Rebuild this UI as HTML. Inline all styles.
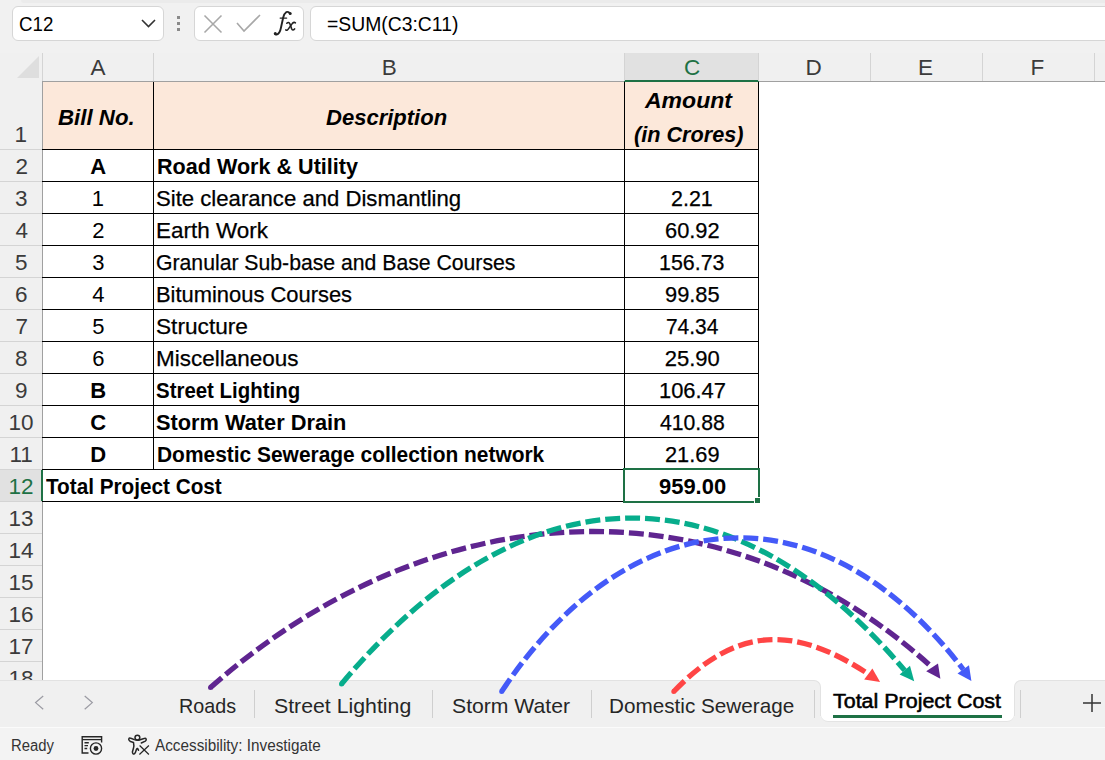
<!DOCTYPE html>
<html><head><meta charset="utf-8"><style>
*{margin:0;padding:0;box-sizing:border-box}
html,body{width:1105px;height:760px;overflow:hidden;background:#fff;font-family:"Liberation Sans",sans-serif;color:#000}
.a{position:absolute}
.t{position:absolute;white-space:nowrap;transform-origin:0 0;line-height:1}
.box{position:absolute;background:#fff;border:1px solid #d6d6d6;border-radius:6px}
</style></head><body>
<div class="a" style="left:0;top:0;width:1105px;height:53px;background:#f1f1f1"></div>
<div class="a" style="left:21px;top:0;width:1084px;height:3px;background:#ebebeb;border-bottom-left-radius:8px"></div>
<div class="box" style="left:12px;top:6px;width:152px;height:35px"></div>
<div class="t" style="left:18.74px;top:15.20px;font-family:'Liberation Sans';font-size:19.5px;font-weight:normal;font-style:normal;color:#000;transform:scaleX(0.9588);">C12</div>
<svg class="a" style="left:139px;top:16px" width="20" height="14"><path d="M3 4 L9.5 10.5 L16 4" fill="none" stroke="#333" stroke-width="1.6"/></svg>
<div class="a" style="left:177px;top:16px;width:3px;height:3px;background:#8a8a8a"></div>
<div class="a" style="left:177px;top:22px;width:3px;height:3px;background:#8a8a8a"></div>
<div class="a" style="left:177px;top:28px;width:3px;height:3px;background:#8a8a8a"></div>
<div class="box" style="left:194px;top:6px;width:110px;height:35px"></div>
<svg class="a" style="left:194px;top:6px" width="110" height="35"><path d="M10.5 9.5 L27.5 26.5 M27.5 9.5 L10.5 26.5" stroke="#a8a8a8" stroke-width="1.6" fill="none"/><path d="M43 17 L50 25 L66 9" stroke="#a8a8a8" stroke-width="1.6" fill="none"/></svg>
<svg class="a" style="left:264px;top:6px" width="40" height="34" viewBox="264 6 40 34"><g fill="none" stroke="#222" stroke-linecap="round">
<path d="M289.6 13.2 Q288.6 11.2 286.2 12.2 Q284 13.6 283.2 17.5 L281 27.5 Q279.8 33.8 276.6 34.6 Q275.2 34.9 275 33.6" stroke-width="1.9"/>
<path d="M280.2 18.1 H286.6" stroke-width="1.4"/>
<path d="M286.8 23.2 Q288.6 21.4 289.9 23.8 L291.6 28.6 Q292.6 31.2 294.6 28.9" stroke-width="1.6"/>
<path d="M295.4 22.8 Q294 21.7 292.4 23.4 L288.4 28.9 Q287 30.9 285.8 29.9" stroke-width="1.6"/>
</g><circle cx="290.2" cy="13.4" r="1.5" fill="#222"/><circle cx="275.3" cy="33.4" r="1.5" fill="#222"/></svg>
<div class="box" style="left:310px;top:6px;width:820px;height:35px"></div>
<div class="t" style="left:326.71px;top:14.90px;font-family:'Liberation Sans';font-size:19.5px;font-weight:normal;font-style:normal;color:#000;transform:scaleX(0.9923);">=SUM(C3:C11)</div>
<div class="a" style="left:0;top:53px;width:1105px;height:28px;background:#f0f0f0"></div>
<div class="a" style="left:42px;top:81px;width:1063px;height:1px;background:#a0a0a0"></div>
<div class="a" style="left:4px;top:81px;width:38px;height:1px;background:linear-gradient(to right,#f0f0f0,#d0d0d0)"></div>
<div class="a" style="left:0;top:53px;width:42px;height:627px;background:#f0f0f0"></div>
<div class="a" style="left:42px;top:81px;width:1px;height:599px;background:#a0a0a0"></div>
<div class="a" style="left:42px;top:53px;width:1px;height:28px;background:#d4d4d4"></div>
<svg class="a" style="left:16px;top:55px" width="24" height="24"><path d="M23 1 L23 23 L1 23 Z" fill="#dedede"/></svg>
<div class="a" style="left:624px;top:53px;width:135px;height:28px;background:#e1e1e1"></div>
<div class="a" style="left:624px;top:80px;width:135px;height:2px;background:#1e7145"></div>
<div class="a" style="left:0;top:470px;width:42px;height:31px;background:#e1e1e1"></div>
<div class="a" style="left:41px;top:469px;width:2px;height:33px;background:#1e7145"></div>
<div class="a" style="left:153px;top:53px;width:1px;height:28px;background:#d4d4d4"></div>
<div class="a" style="left:624px;top:53px;width:1px;height:28px;background:#d4d4d4"></div>
<div class="a" style="left:758px;top:53px;width:1px;height:28px;background:#d4d4d4"></div>
<div class="a" style="left:870px;top:53px;width:1px;height:28px;background:#d4d4d4"></div>
<div class="a" style="left:982px;top:53px;width:1px;height:28px;background:#d4d4d4"></div>
<div class="a" style="left:1094px;top:53px;width:1px;height:28px;background:#d4d4d4"></div>
<div class="a" style="left:1206px;top:53px;width:1px;height:28px;background:#d4d4d4"></div>
<div class="a" style="left:0;top:149px;width:42px;height:1px;background:#d4d4d4"></div>
<div class="a" style="left:0;top:181px;width:42px;height:1px;background:#d4d4d4"></div>
<div class="a" style="left:0;top:213px;width:42px;height:1px;background:#d4d4d4"></div>
<div class="a" style="left:0;top:245px;width:42px;height:1px;background:#d4d4d4"></div>
<div class="a" style="left:0;top:277px;width:42px;height:1px;background:#d4d4d4"></div>
<div class="a" style="left:0;top:309px;width:42px;height:1px;background:#d4d4d4"></div>
<div class="a" style="left:0;top:341px;width:42px;height:1px;background:#d4d4d4"></div>
<div class="a" style="left:0;top:373px;width:42px;height:1px;background:#d4d4d4"></div>
<div class="a" style="left:0;top:405px;width:42px;height:1px;background:#d4d4d4"></div>
<div class="a" style="left:0;top:437px;width:42px;height:1px;background:#d4d4d4"></div>
<div class="a" style="left:0;top:469px;width:42px;height:1px;background:#d4d4d4"></div>
<div class="a" style="left:0;top:501px;width:42px;height:1px;background:#d4d4d4"></div>
<div class="a" style="left:0;top:533px;width:42px;height:1px;background:#d4d4d4"></div>
<div class="a" style="left:0;top:565px;width:42px;height:1px;background:#d4d4d4"></div>
<div class="a" style="left:0;top:597px;width:42px;height:1px;background:#d4d4d4"></div>
<div class="a" style="left:0;top:629px;width:42px;height:1px;background:#d4d4d4"></div>
<div class="a" style="left:0;top:661px;width:42px;height:1px;background:#d4d4d4"></div>
<div class="t" style="left:90.50px;top:56.90px;font-family:'Liberation Sans';font-size:22.5px;font-weight:normal;font-style:normal;color:#3b3b3b;transform:scaleX(1.0);">A</div>
<div class="t" style="left:381.80px;top:56.90px;font-family:'Liberation Sans';font-size:22.5px;font-weight:normal;font-style:normal;color:#3b3b3b;transform:scaleX(1.0);">B</div>
<div class="t" style="left:684.10px;top:56.90px;font-family:'Liberation Sans';font-size:22.5px;font-weight:normal;font-style:normal;color:#1e7145;transform:scaleX(1.0);">C</div>
<div class="t" style="left:805.50px;top:56.90px;font-family:'Liberation Sans';font-size:22.5px;font-weight:normal;font-style:normal;color:#3b3b3b;transform:scaleX(1.0);">D</div>
<div class="t" style="left:918.00px;top:56.90px;font-family:'Liberation Sans';font-size:22.5px;font-weight:normal;font-style:normal;color:#3b3b3b;transform:scaleX(1.0);">E</div>
<div class="t" style="left:1030.50px;top:56.90px;font-family:'Liberation Sans';font-size:22.5px;font-weight:normal;font-style:normal;color:#3b3b3b;transform:scaleX(1.0);">F</div>
<div class="t" style="left:1141.50px;top:56.90px;font-family:'Liberation Sans';font-size:22.5px;font-weight:normal;font-style:normal;color:#3b3b3b;transform:scaleX(1.0);">G</div>
<div class="t" style="left:14.40px;top:124.00px;font-family:'Liberation Sans';font-size:22.5px;font-weight:normal;font-style:normal;color:#3b3b3b;transform:scaleX(1.0);">1</div>
<div class="t" style="left:15.40px;top:156.00px;font-family:'Liberation Sans';font-size:22.5px;font-weight:normal;font-style:normal;color:#3b3b3b;transform:scaleX(1.0);">2</div>
<div class="t" style="left:14.90px;top:188.00px;font-family:'Liberation Sans';font-size:22.5px;font-weight:normal;font-style:normal;color:#3b3b3b;transform:scaleX(1.0);">3</div>
<div class="t" style="left:15.40px;top:220.00px;font-family:'Liberation Sans';font-size:22.5px;font-weight:normal;font-style:normal;color:#3b3b3b;transform:scaleX(1.0);">4</div>
<div class="t" style="left:14.90px;top:252.00px;font-family:'Liberation Sans';font-size:22.5px;font-weight:normal;font-style:normal;color:#3b3b3b;transform:scaleX(1.0);">5</div>
<div class="t" style="left:14.90px;top:284.00px;font-family:'Liberation Sans';font-size:22.5px;font-weight:normal;font-style:normal;color:#3b3b3b;transform:scaleX(1.0);">6</div>
<div class="t" style="left:15.40px;top:316.00px;font-family:'Liberation Sans';font-size:22.5px;font-weight:normal;font-style:normal;color:#3b3b3b;transform:scaleX(1.0);">7</div>
<div class="t" style="left:14.90px;top:348.00px;font-family:'Liberation Sans';font-size:22.5px;font-weight:normal;font-style:normal;color:#3b3b3b;transform:scaleX(1.0);">8</div>
<div class="t" style="left:14.90px;top:380.00px;font-family:'Liberation Sans';font-size:22.5px;font-weight:normal;font-style:normal;color:#3b3b3b;transform:scaleX(1.0);">9</div>
<div class="t" style="left:8.40px;top:412.00px;font-family:'Liberation Sans';font-size:22.5px;font-weight:normal;font-style:normal;color:#3b3b3b;transform:scaleX(1.0);">10</div>
<div class="t" style="left:9.40px;top:444.00px;font-family:'Liberation Sans';font-size:22.5px;font-weight:normal;font-style:normal;color:#3b3b3b;transform:scaleX(1.0);">11</div>
<div class="t" style="left:8.40px;top:476.00px;font-family:'Liberation Sans';font-size:22.5px;font-weight:normal;font-style:normal;color:#1e7145;transform:scaleX(1.0);">12</div>
<div class="t" style="left:8.40px;top:508.00px;font-family:'Liberation Sans';font-size:22.5px;font-weight:normal;font-style:normal;color:#3b3b3b;transform:scaleX(1.0);">13</div>
<div class="t" style="left:8.40px;top:540.00px;font-family:'Liberation Sans';font-size:22.5px;font-weight:normal;font-style:normal;color:#3b3b3b;transform:scaleX(1.0);">14</div>
<div class="t" style="left:8.40px;top:572.00px;font-family:'Liberation Sans';font-size:22.5px;font-weight:normal;font-style:normal;color:#3b3b3b;transform:scaleX(1.0);">15</div>
<div class="t" style="left:8.40px;top:604.00px;font-family:'Liberation Sans';font-size:22.5px;font-weight:normal;font-style:normal;color:#3b3b3b;transform:scaleX(1.0);">16</div>
<div class="t" style="left:8.40px;top:636.00px;font-family:'Liberation Sans';font-size:22.5px;font-weight:normal;font-style:normal;color:#3b3b3b;transform:scaleX(1.0);">17</div>
<div class="t" style="left:8.40px;top:668.00px;font-family:'Liberation Sans';font-size:22.5px;font-weight:normal;font-style:normal;color:#3b3b3b;transform:scaleX(1.0);">18</div>
<div class="a" style="left:43px;top:82px;width:715px;height:67px;background:#fce8da"></div>
<div class="a" style="left:42px;top:149px;width:717px;height:1px;background:#000"></div>
<div class="a" style="left:42px;top:181px;width:717px;height:1px;background:#000"></div>
<div class="a" style="left:42px;top:213px;width:717px;height:1px;background:#000"></div>
<div class="a" style="left:42px;top:245px;width:717px;height:1px;background:#000"></div>
<div class="a" style="left:42px;top:277px;width:717px;height:1px;background:#000"></div>
<div class="a" style="left:42px;top:309px;width:717px;height:1px;background:#000"></div>
<div class="a" style="left:42px;top:341px;width:717px;height:1px;background:#000"></div>
<div class="a" style="left:42px;top:373px;width:717px;height:1px;background:#000"></div>
<div class="a" style="left:42px;top:405px;width:717px;height:1px;background:#000"></div>
<div class="a" style="left:42px;top:437px;width:717px;height:1px;background:#000"></div>
<div class="a" style="left:42px;top:469px;width:717px;height:1px;background:#000"></div>
<div class="a" style="left:42px;top:501px;width:717px;height:1px;background:#000"></div>
<div class="a" style="left:153px;top:82px;width:1px;height:388px;background:#000"></div>
<div class="a" style="left:624px;top:82px;width:1px;height:420px;background:#000"></div>
<div class="a" style="left:758px;top:82px;width:1px;height:420px;background:#000"></div>
<div class="t" style="left:57.90px;top:107.00px;font-family:'Liberation Sans';font-size:22px;font-weight:bold;font-style:italic;color:#000;transform:scaleX(1.0122);">Bill No.</div>
<div class="t" style="left:325.70px;top:106.80px;font-family:'Liberation Sans';font-size:22px;font-weight:bold;font-style:italic;color:#000;transform:scaleX(1.0008);">Description</div>
<div class="t" style="left:644.80px;top:89.70px;font-family:'Liberation Sans';font-size:22px;font-weight:bold;font-style:italic;color:#000;transform:scaleX(1.0464);">Amount</div>
<div class="t" style="left:634.02px;top:123.90px;font-family:'Liberation Sans';font-size:22px;font-weight:bold;font-style:italic;color:#000;transform:scaleX(0.9845);">(in Crores)</div>
<div class="t" style="left:90.20px;top:155.50px;font-family:'Liberation Sans';font-size:22px;font-weight:bold;font-style:normal;color:#000;transform:scaleX(1.0);">A</div>
<div class="t" style="left:157.02px;top:155.50px;font-family:'Liberation Sans';font-size:22px;font-weight:bold;font-style:normal;color:#000;transform:scaleX(0.9809);">Road Work &amp; Utility</div>
<div class="t" style="left:91.70px;top:187.50px;font-family:'Liberation Sans';font-size:22px;font-weight:normal;font-style:normal;color:#000;transform:scaleX(1.0);">1</div>
<div class="t" style="left:156.39px;top:187.50px;font-family:'Liberation Sans';font-size:22px;font-weight:normal;font-style:normal;color:#000;transform:scaleX(1.006);-webkit-text-stroke:0.25px #000;">Site clearance and Dismantling</div>
<div class="t" style="left:670.62px;top:187.50px;font-family:'Liberation Sans';font-size:22px;font-weight:normal;font-style:normal;color:#000;transform:scaleX(0.9756);-webkit-text-stroke:0.25px #000;">2.21</div>
<div class="t" style="left:92.20px;top:219.50px;font-family:'Liberation Sans';font-size:22px;font-weight:normal;font-style:normal;color:#000;transform:scaleX(1.0);">2</div>
<div class="t" style="left:156.36px;top:219.50px;font-family:'Liberation Sans';font-size:22px;font-weight:normal;font-style:normal;color:#000;transform:scaleX(1.0206);-webkit-text-stroke:0.25px #000;">Earth Work</div>
<div class="t" style="left:664.71px;top:219.50px;font-family:'Liberation Sans';font-size:22px;font-weight:normal;font-style:normal;color:#000;transform:scaleX(0.9925);-webkit-text-stroke:0.25px #000;">60.92</div>
<div class="t" style="left:92.20px;top:251.50px;font-family:'Liberation Sans';font-size:22px;font-weight:normal;font-style:normal;color:#000;transform:scaleX(1.0);">3</div>
<div class="t" style="left:156.44px;top:251.50px;font-family:'Liberation Sans';font-size:22px;font-weight:normal;font-style:normal;color:#000;transform:scaleX(0.9636);-webkit-text-stroke:0.25px #000;">Granular Sub-base and Base Courses</div>
<div class="t" style="left:658.66px;top:251.50px;font-family:'Liberation Sans';font-size:22px;font-weight:normal;font-style:normal;color:#000;transform:scaleX(0.9723);-webkit-text-stroke:0.25px #000;">156.73</div>
<div class="t" style="left:92.20px;top:283.50px;font-family:'Liberation Sans';font-size:22px;font-weight:normal;font-style:normal;color:#000;transform:scaleX(1.0);">4</div>
<div class="t" style="left:156.41px;top:283.50px;font-family:'Liberation Sans';font-size:22px;font-weight:normal;font-style:normal;color:#000;transform:scaleX(0.9959);-webkit-text-stroke:0.25px #000;">Bituminous Courses</div>
<div class="t" style="left:664.71px;top:283.50px;font-family:'Liberation Sans';font-size:22px;font-weight:normal;font-style:normal;color:#000;transform:scaleX(0.9925);-webkit-text-stroke:0.25px #000;">99.85</div>
<div class="t" style="left:92.20px;top:315.50px;font-family:'Liberation Sans';font-size:22px;font-weight:normal;font-style:normal;color:#000;transform:scaleX(1.0);">5</div>
<div class="t" style="left:156.37px;top:315.50px;font-family:'Liberation Sans';font-size:22px;font-weight:normal;font-style:normal;color:#000;transform:scaleX(1.0299);-webkit-text-stroke:0.25px #000;">Structure</div>
<div class="t" style="left:666.05px;top:315.50px;font-family:'Liberation Sans';font-size:22px;font-weight:normal;font-style:normal;color:#000;transform:scaleX(0.95);-webkit-text-stroke:0.25px #000;">74.34</div>
<div class="t" style="left:92.20px;top:347.50px;font-family:'Liberation Sans';font-size:22px;font-weight:normal;font-style:normal;color:#000;transform:scaleX(1.0);">6</div>
<div class="t" style="left:156.36px;top:347.50px;font-family:'Liberation Sans';font-size:22px;font-weight:normal;font-style:normal;color:#000;transform:scaleX(1.0219);-webkit-text-stroke:0.25px #000;">Miscellaneous</div>
<div class="t" style="left:664.70px;top:347.50px;font-family:'Liberation Sans';font-size:22px;font-weight:normal;font-style:normal;color:#000;transform:scaleX(1.0);-webkit-text-stroke:0.25px #000;">25.90</div>
<div class="t" style="left:90.20px;top:379.50px;font-family:'Liberation Sans';font-size:22px;font-weight:bold;font-style:normal;color:#000;transform:scaleX(1.0);">B</div>
<div class="t" style="left:156.47px;top:379.50px;font-family:'Liberation Sans';font-size:22px;font-weight:bold;font-style:normal;color:#000;transform:scaleX(0.9288);">Street Lighting</div>
<div class="t" style="left:658.51px;top:379.50px;font-family:'Liberation Sans';font-size:22px;font-weight:normal;font-style:normal;color:#000;transform:scaleX(0.9953);-webkit-text-stroke:0.25px #000;">106.47</div>
<div class="t" style="left:90.20px;top:411.50px;font-family:'Liberation Sans';font-size:22px;font-weight:bold;font-style:normal;color:#000;transform:scaleX(1.0);">C</div>
<div class="t" style="left:156.41px;top:411.50px;font-family:'Liberation Sans';font-size:22px;font-weight:bold;font-style:normal;color:#000;transform:scaleX(0.99);">Storm Water Drain</div>
<div class="t" style="left:659.70px;top:411.50px;font-family:'Liberation Sans';font-size:22px;font-weight:normal;font-style:normal;color:#000;transform:scaleX(0.9627);-webkit-text-stroke:0.25px #000;">410.88</div>
<div class="t" style="left:90.20px;top:443.50px;font-family:'Liberation Sans';font-size:22px;font-weight:bold;font-style:normal;color:#000;transform:scaleX(1.0);">D</div>
<div class="t" style="left:157.45px;top:443.50px;font-family:'Liberation Sans';font-size:22px;font-weight:bold;font-style:normal;color:#000;transform:scaleX(0.9512);">Domestic Sewerage collection network</div>
<div class="t" style="left:665.01px;top:443.50px;font-family:'Liberation Sans';font-size:22px;font-weight:normal;font-style:normal;color:#000;transform:scaleX(0.9906);-webkit-text-stroke:0.25px #000;">21.69</div>
<div class="t" style="left:46.30px;top:475.50px;font-family:'Liberation Sans';font-size:22px;font-weight:bold;font-style:normal;color:#000;transform:scaleX(0.9419);">Total Project Cost</div>
<div class="t" style="left:658.70px;top:475.50px;font-family:'Liberation Sans';font-size:22px;font-weight:bold;font-style:normal;color:#000;transform:scaleX(0.9969);">959.00</div>
<div class="a" style="left:623px;top:468px;width:137px;height:35px;border:2px solid #1e7145"></div>
<div class="a" style="left:754px;top:497px;width:7px;height:7px;background:#1e7145;border:1px solid #fff"></div>
<div class="a" style="left:0;top:680px;width:821px;height:47px;background:#f0f0f0;border-top:1px solid #e2e2e2;border-right:1px solid #e2e2e2;border-top-right-radius:7px"></div>
<div class="a" style="left:1014px;top:680px;width:91px;height:47px;background:#f0f0f0;border-top:1px solid #e2e2e2;border-left:1px solid #e2e2e2;border-top-left-radius:7px"></div>
<div class="a" style="left:815px;top:716px;width:205px;height:11px;background:#f0f0f0"></div>
<div class="a" style="left:821px;top:676px;width:193px;height:46px;background:#fff;border-radius:0 0 7px 7px;border-bottom:1px solid #e4e4e4"></div>
<div class="a" style="left:0;top:727px;width:1105px;height:33px;background:#f3f3f3;border-top:1px solid #fbfbfb"></div>
<svg class="a" style="left:0;top:680px" width="120" height="47" viewBox="0 680 120 47"><path d="M43.2 696 L35.6 702.6 L43.2 709.3 M84.7 696 L92.3 702.6 L84.7 709.3" fill="none" stroke="#9c9ca4" stroke-width="1.25"/></svg>
<div class="t" style="left:178.62px;top:694.70px;font-family:'Liberation Sans';font-size:21px;font-weight:normal;font-style:normal;color:#262626;transform:scaleX(0.9397);">Roads</div>
<div class="t" style="left:274.19px;top:694.70px;font-family:'Liberation Sans';font-size:21px;font-weight:normal;font-style:normal;color:#262626;transform:scaleX(1.0135);">Street Lighting</div>
<div class="t" style="left:451.99px;top:694.70px;font-family:'Liberation Sans';font-size:21px;font-weight:normal;font-style:normal;color:#262626;transform:scaleX(1.0086);">Storm Water</div>
<div class="t" style="left:609.03px;top:694.70px;font-family:'Liberation Sans';font-size:21px;font-weight:normal;font-style:normal;color:#262626;transform:scaleX(0.9854);">Domestic Sewerage</div>
<div class="a" style="left:254px;top:690px;width:1px;height:28px;background:#cfcfcf"></div>
<div class="a" style="left:432px;top:690px;width:1px;height:28px;background:#cfcfcf"></div>
<div class="a" style="left:591px;top:690px;width:1px;height:28px;background:#cfcfcf"></div>
<div class="a" style="left:814px;top:690px;width:1px;height:28px;background:#cfcfcf"></div>
<div class="a" style="left:1020px;top:690px;width:1px;height:28px;background:#cfcfcf"></div>
<div class="t" style="left:833.00px;top:690.30px;font-family:'Liberation Sans';font-size:21px;font-weight:normal;font-style:normal;color:#000;transform:scaleX(1.0212);-webkit-text-stroke:0.55px #000;">Total Project Cost</div>
<div class="a" style="left:833px;top:715px;width:169px;height:3px;background:#1e7145"></div>
<svg class="a" style="left:1082px;top:693px" width="20" height="20"><path d="M10 1 V19 M1 10 H19" stroke="#333" stroke-width="1.5"/></svg>
<div class="t" style="left:10.97px;top:738.20px;font-family:'Liberation Sans';font-size:16px;font-weight:normal;font-style:normal;color:#333;transform:scaleX(0.9289);">Ready</div>
<div class="t" style="left:154.50px;top:737.80px;font-family:'Liberation Sans';font-size:16px;font-weight:normal;font-style:normal;color:#333;transform:scaleX(0.9555);">Accessibility: Investigate</div>
<svg class="a" style="left:70px;top:728px" width="90" height="32" viewBox="70 728 90 32">
<g fill="none" stroke="#262626" stroke-width="1.4">
<path d="M88.5 753 H82.2 V736.8 H101.6 V742.5"/>
<path d="M82.2 739.6 H101.6" stroke-width="1.3"/>
<path d="M84.5 742.7 H88.8 M84.5 745.6 H88 M84.5 748.5 H87.2"/>
<circle cx="96" cy="748.5" r="5.6"/>
</g>
<circle cx="96" cy="748.5" r="2.4" fill="#262626"/>
<g fill="none" stroke="#262626" stroke-width="1.5" stroke-linecap="round" stroke-linejoin="round">
<circle cx="137.4" cy="737.6" r="2.4"/>
<path d="M141.3 743 L145.3 741.1 Q147 739.8 145.6 738.4 Q144.8 737.9 140.2 739.8 Q137.4 740.9 134.3 739.6 Q130 737.6 129.2 738.2 Q127.8 739.8 130.5 741.5 L133.5 742.5 Q134.2 746 133.5 748 L132.4 752 Q132.6 754.4 134.4 753.9 Q135.4 753.2 136.5 749.2 Q137.4 747.2 138.5 750.3"/>
</g>
<path d="M139.6 745.5 L148.9 754.5 M148.9 745.5 L139.4 754.5" stroke="#262626" stroke-width="1.2"/>
</svg>
<svg class="a" style="left:0;top:0" width="1105" height="760">
<g fill="none" stroke-width="5.3" stroke-dasharray="14.95 4.97">
<path d="M210.5 687.5 C 425.4 497.5, 713.2 469.7, 932.1 667.3" stroke="#5f2590"/>
<path d="M341.5 684.0 C 514.4 476.7, 722.1 454.1, 904.7 670.4" stroke="#07ad8c"/>
<path d="M501.7 691.4 C 628.1 501.1, 818.6 480.6, 963.3 669.5" stroke="#445af8"/>
<path d="M673.8 691.5 C 736.6 625.9, 794.5 625.1, 868.3 674.0" stroke="#ff4545"/>
</g>
<circle cx="210.5" cy="687.5" r="2.5" fill="#5f2590"/>
<circle cx="341.5" cy="684" r="2.5" fill="#07ad8c"/>
<circle cx="501.7" cy="691.4" r="2.5" fill="#445af8"/>
<circle cx="673.8" cy="691.5" r="2.5" fill="#ff4545"/>
<polygon points="872.4,668.5 864.2,679.6 880.1,682" fill="#ff4545"/>
<polygon points="910,665.7 899.6,674.6 914.2,681.2" fill="#07ad8c"/>
<polygon points="938,663.5 926.2,671.3 940.4,678.8" fill="#5f2590"/>
<polygon points="969,665.3 957.5,673.6 971.4,681" fill="#445af8"/>
</svg>
</body></html>
